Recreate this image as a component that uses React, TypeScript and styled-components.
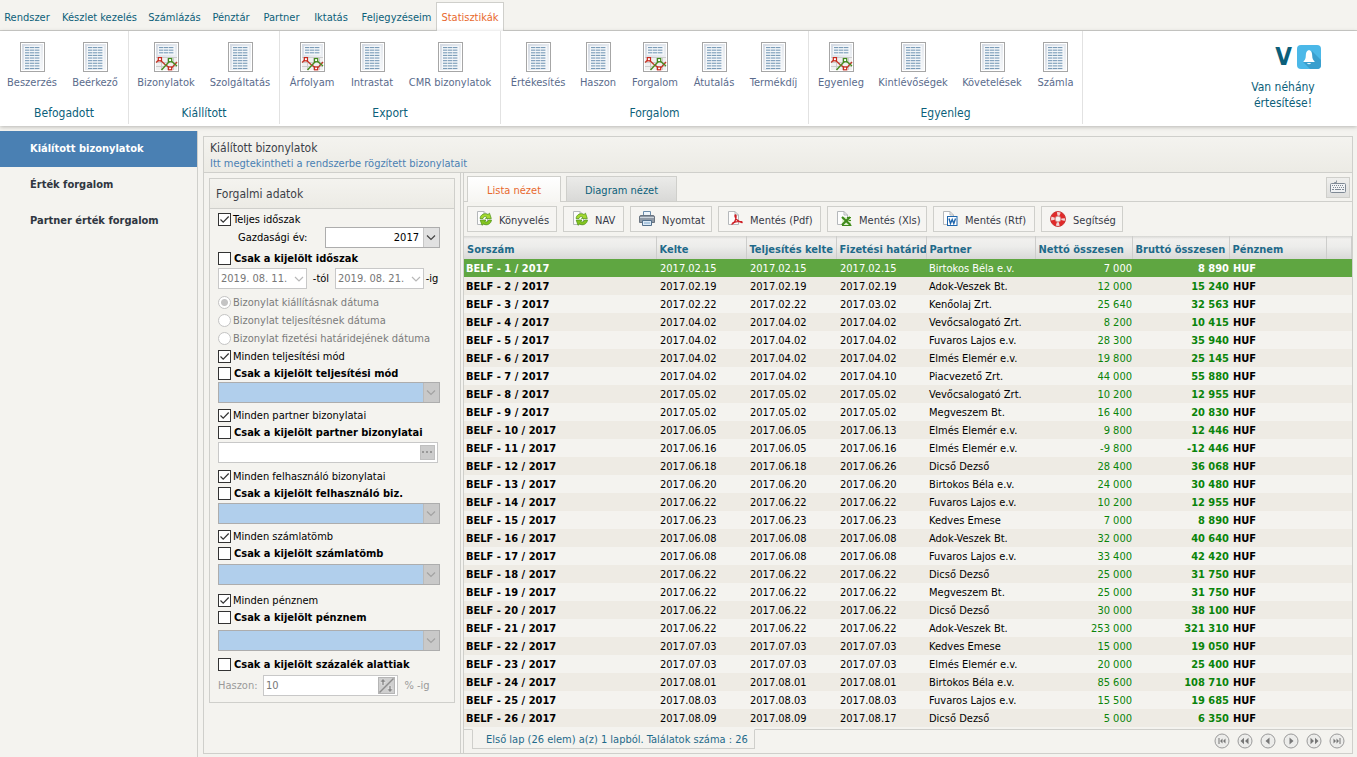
import React, { useState } from "react";
import styled, { createGlobalStyle, css } from "styled-components";

const color = {
  page: "#f4f3ef",
  line: "#cfcfcb",
  teal: "#0c5f7a",
  orange: "#e8692e",
  blue: "#4a80b3",
};

const GlobalStyle = createGlobalStyle`
  * { box-sizing: border-box; }
  body {
    margin: 0;
    background: ${color.page};
    font-family: "DejaVu Sans Condensed", "DejaVu Sans", sans-serif;
    font-stretch: condensed;
    font-size: 11px;
    line-height: 14px;
    color: #000;
  }
  button, input, select {
    font: inherit;
    color: inherit;
    margin: 0;
  }
`;

const Page = styled.div`
  display: flex;
  flex-direction: column;
  min-height: 100vh;
`;

/* ---------- main menu ---------- */

const MenuBar = styled.nav`
  display: flex;
  align-items: flex-end;
  height: 31px;
  border-bottom: 1px solid ${color.line};
`;

const MenuItem = styled.button<{ $active?: boolean; $width: number }>`
  width: ${(p) => p.$width}px;
  height: 28px;
  padding: 2px 0 0;
  border: 1px solid transparent;
  border-bottom: 0;
  background: none;
  color: ${color.teal};
  white-space: nowrap;
  ${(p) =>
    p.$active &&
    css`
      height: 29px;
      margin-bottom: -1px;
      border-color: ${color.line};
      background: #fff;
      color: ${color.orange};
    `}
`;

/* ---------- ribbon ---------- */

const Ribbon = styled.header`
  display: flex;
  height: 95px;
  background: #fff;
  box-shadow: 0 1px 4px rgba(0, 0, 0, 0.25);
`;

const RibbonGroup = styled.section`
  display: flex;
  flex-direction: column;
  justify-content: space-between;
  height: 93px;
  padding: 11px 1px 4px;
  border-right: 1px solid #e2e2e2;
`;

const RibbonItems = styled.div`
  display: flex;
`;

const RibbonButton = styled.button<{ $width: number }>`
  display: flex;
  flex-direction: column;
  align-items: center;
  gap: 4px;
  width: ${(p) => p.$width}px;
  padding: 0;
  border: 0;
  background: none;
  color: #5a6b8c;
  white-space: nowrap;
`;

const GroupTitle = styled.div`
  font-size: 12px;
  text-align: center;
  color: ${color.teal};
`;

const Notice = styled.div`
  display: flex;
  flex-direction: column;
  align-items: center;
  width: 148px;
  margin-left: auto;
  padding-top: 13px;
  font-size: 12px;
  line-height: 16px;
  text-align: center;
  color: ${color.teal};
`;

const NoticeTop = styled.div`
  display: flex;
  align-items: center;
  gap: 5px;
  height: 26px;
  margin: 0 0 9px 30px;
  font-size: 24px;
  font-weight: bold;
`;

/* ---------- body ---------- */

const Body = styled.div`
  display: flex;
  flex: 1;
  padding-top: 5px;
`;

const Sidebar = styled.nav`
  flex: 0 0 198px;
  border-right: 1px solid ${color.line};
`;

const SideLink = styled.a<{ $active?: boolean }>`
  display: flex;
  align-items: center;
  height: 36px;
  padding-left: 30px;
  font-weight: bold;
  text-decoration: none;
  color: ${(p) => (p.$active ? "#fff" : "#2f3640")};
  background: ${(p) => (p.$active ? color.blue : "none")};
`;

const Panel = styled.main`
  display: flex;
  flex-direction: column;
  flex: 1;
  min-width: 0;
  margin: 5px 4px 3px 5px;
  border: 1px solid ${color.line};
`;

const PanelHeader = styled.div`
  height: 36px;
  padding: 3px 6px;
  border-bottom: 1px solid ${color.line};
  background: linear-gradient(#f4f3ef, #ecebe5);
`;

const PanelTitle = styled.h1`
  margin: 0;
  font-size: 12px;
  font-weight: normal;
  line-height: 16px;
  color: #3c3f48;
`;

const PanelHint = styled.div`
  line-height: 16px;
  color: ${color.blue};
`;

const Columns = styled.div`
  display: flex;
  flex: 1;
`;

const FilterColumn = styled.aside`
  flex: 0 0 257px;
  padding: 5px;
  border-right: 1px solid ${color.line};
`;

const FilterBox = styled.form`
  width: 246px;
  border: 1px solid ${color.line};
`;

const FilterTitle = styled.h2`
  margin: 0;
  height: 30px;
  padding-left: 6px;
  border-bottom: 1px solid ${color.line};
  background: linear-gradient(#f4f3ef, #ecebe5);
  font-size: 12px;
  font-weight: normal;
  line-height: 30px;
  color: #3c3f48;
`;

const FilterBody = styled.div`
  padding: 2px 14px 6px 8px;
`;

/* $top is the space over the group, $field the extra space over its last control */
const FilterGroup = styled.div<{ $top: number; $field?: number }>`
  display: flex;
  flex-direction: column;
  gap: 1px;
  margin-top: ${(p) => p.$top}px;
  & > :last-child { margin-top: ${(p) => p.$field ?? 0}px; }
`;

const RadioList = styled.div`
  margin-top: 4px;
`;

const LabelText = styled.span`
  padding-top: 2px;
`;

const CheckLabel = styled.label<{ $strong?: boolean }>`
  display: flex;
  align-items: center;
  gap: ${(p) => (p.$strong ? 3 : 2)}px;
  height: 16px;
  white-space: nowrap;
  font-weight: ${(p) => (p.$strong ? "bold" : "normal")};
`;

const CheckBox = styled.input`
  appearance: none;
  flex: none;
  width: 13px;
  height: 13px;
  border: 1px solid #333;
  background: #fff;
`;

const CheckCell = styled.span`
  display: grid;
  & > * { grid-area: 1 / 1; }
  & > svg { pointer-events: none; }
  & > input:not(:checked) + svg { visibility: hidden; }
`;

const RadioLabel = styled.label`
  display: flex;
  align-items: center;
  gap: 2px;
  height: 18px;
  color: #7b7b7b;
  white-space: nowrap;
`;

const Radio = styled.input`
  appearance: none;
  flex: none;
  width: 13px;
  height: 13px;
  border: 1px solid #c4c4c4;
  border-radius: 50%;
  background: #fff;
  &:checked {
    background: radial-gradient(circle, #c4c4c4 3px, #fff 4px);
  }
`;

const FieldRow = styled.div<{ $muted?: boolean }>`
  display: flex;
  align-items: center;
  color: ${(p) => (p.$muted ? "#9a9a9a" : "#000")};
`;

const YearLabel = styled.label`
  flex: 1;
  padding-left: 20px;
`;

const ProfitLabel = styled.label`
  width: 45px;
`;

const Suffix = styled.span<{ $width: number }>`
  width: ${(p) => p.$width}px;
  text-align: center;
`;

const Picker = styled.div<{ $width?: number }>`
  display: grid;
  grid-template-columns: 1fr 17px;
  width: ${(p) => (p.$width ? `${p.$width}px` : "100%")};
  height: 21px;
  & > select { grid-area: 1 / 1 / 2 / 3; }
  & > svg { grid-area: 1 / 2; pointer-events: none; }
`;

const Select = styled.select`
  appearance: none;
  min-width: 0;
  padding: 0 20px 0 2px;
  border: 1px solid #adadad;
  border-radius: 0;
  background: #fff;
  text-align: right;
  text-align-last: right;
  &:disabled {
    background: #b1cfec;
    opacity: 1;
  }
`;

const Boxed = styled.div<{ $width?: number }>`
  display: flex;
  align-items: center;
  width: ${(p) => (p.$width ? `${p.$width}px` : "auto")};
  height: 21px;
  padding-right: 2px;
  border: 1px solid #c8c8c8;
  background: #fff;
`;

const PlainInput = styled.input`
  flex: 1;
  min-width: 0;
  width: 0;
  padding: 0 2px;
  border: 0;
  background: none;
  color: #777;
  white-space: nowrap;
`;

const DotsButton = styled.button`
  display: flex;
  align-items: center;
  justify-content: center;
  width: 15px;
  height: 15px;
  padding: 0;
  border: 1px solid #bfbfbf;
  background: #cccccc;
`;

/* ---------- list side ---------- */

const ListColumn = styled.section`
  display: flex;
  flex-direction: column;
  flex: 1;
  min-width: 0;
  margin-left: 2px;
  border-left: 1px solid ${color.line};
`;

const TabBar = styled.div`
  display: flex;
  align-items: flex-end;
  gap: 5px;
  height: 29px;
  padding: 0 2px 0 3px;
  border-bottom: 1px solid ${color.line};
`;

const Tab = styled.button<{ $active?: boolean; $width: number }>`
  width: ${(p) => p.$width}px;
  height: ${(p) => (p.$active ? 26 : 25)}px;
  margin-bottom: ${(p) => (p.$active ? -1 : 0)}px;
  padding: 3px 0 0;
  border: 1px solid ${color.line};
  border-bottom: 0;
  background: ${(p) =>
    p.$active ? "linear-gradient(#fff, #f6f5f2)" : "linear-gradient(#ebebe9, #d9d9d7)"};
  color: ${(p) => (p.$active ? color.orange : color.teal)};
`;

const KeyboardButton = styled.button`
  display: flex;
  align-items: center;
  justify-content: center;
  align-self: center;
  width: 24px;
  height: 21px;
  margin: 0 0 0 auto;
  padding: 0;
  border: 1px solid ${color.line};
  background: linear-gradient(#efefed, #dfdfdd);
`;

const Toolbar = styled.div`
  display: flex;
  gap: 6px;
  padding: 4px 3px;
`;

const ToolButton = styled.button<{ $width: number }>`
  display: flex;
  align-items: center;
  gap: 7px;
  width: ${(p) => p.$width}px;
  height: 26px;
  padding: 0 0 0 8px;
  border: 1px solid ${color.line};
  background: #f6f5f2;
  color: #363a48;
  white-space: nowrap;
  & > span { padding-top: 4px; }
  & > svg { flex: none; }
`;

const Grid = styled.table`
  width: 100%;
  table-layout: fixed;
  border-collapse: collapse;
`;

const GridHead = styled.th`
  height: 23px;
  padding: 4px 0 0 3px;
  overflow: hidden;
  white-space: nowrap;
  text-align: left;
  color: #1f6a8a;
  border-right: 1px solid #cdcdcb;
`;

const HeadRow = styled.tr`
  background: linear-gradient(#d5d5d2, #f1f0ee 3px, #ededeb 10px, #d9d9d8);
`;

const BodyRow = styled.tr<{ $selected?: boolean }>`
  height: 18px;
  &:nth-child(even) { background: #eeebe4; }
  ${(p) =>
    p.$selected &&
    css`
      background: #5fa641;
      td { color: #fff; }
    `}
`;

const Cell = styled.td<{ $strong?: boolean; $money?: boolean; $pad?: number }>`
  padding: 2px 0 0 ${(p) => p.$pad ?? 4}px;
  overflow: hidden;
  white-space: nowrap;
  font-weight: ${(p) => (p.$strong ? "bold" : "normal")};
  text-align: ${(p) => (p.$money ? "right" : "left")};
  color: ${(p) => (p.$money ? "#0a840a" : "#000")};
`;

const Footer = styled.div`
  display: flex;
  justify-content: space-between;
  margin-top: auto;
  height: 24px;
  padding: 0 7px 0 8px;
  border-top: 1px solid ${color.line};
`;

const Status = styled.div`
  height: 20px;
  margin-top: -1px;
  padding: 0 6px 0 13px;
  border: 1px solid ${color.line};
  border-top-color: ${color.page};
  line-height: 20px;
  color: #1f6a8a;
`;

const Pager = styled.div`
  display: flex;
  align-items: center;
  gap: 7px;
  padding-bottom: 2px;
`;

const PagerButton = styled.button`
  display: flex;
  width: 16px;
  height: 16px;
  padding: 0;
  border: 0;
  background: none;
`;

/* ---------- drawings ---------- */

function ReportIcon({ chart }: { chart?: boolean }) {
  const rows = chart ? 3 : 9;
  return (
    <svg width="25" height="30" viewBox="0 0 25 30">
      <defs>
        <linearGradient id="sheet" x1="0" y1="0" x2="1" y2="1">
          <stop offset="0" stopColor="#d3d9e2" />
          <stop offset="1" stopColor="#f6f8fa" />
        </linearGradient>
      </defs>
      <rect x="0.5" y="0.5" width="24" height="29" fill="#fff" stroke="#a6a6a6" />
      <rect x="2" y="2" width="21" height="26" fill="url(#sheet)" />
      <rect x="4" y="4" width="17" height={chart ? 9 : 23} fill="#f3f6f9" />
      {Array.from({ length: rows }, (_, i) =>
        [5, 10, 15].map((x) => (
          <rect key={`${x}-${i}`} x={x} y={5 + i * 2.62} width="4.4" height="1.1" fill="#7a9cb8" />
        ))
      )}
      {chart && (
        <g fill="none">
          <rect x="2" y="15" width="21" height="13" fill="#f0f0f0" />
          <path d="M2 15.5H23M2 20.5H23M2 24.5H23M7.500 15V28M13.500 15V28M19.500 15V28" stroke="#cdcdcd" />
          <path d="M2 20.500L5.500 17.500L11 22.500L16.500 26.500L19 24.500L23 20" stroke="#c03a2b" strokeWidth="1.400" />
          <path d="M7.500 28L12 23L16.500 18.500L23 24" stroke="#4a8c1f" strokeWidth="1.400" />
          <rect x="4.300" y="15.600" width="3.200" height="3.200" fill="#fff" stroke="#c8281c" strokeWidth="1.200" />
          <rect x="14.500" y="25" width="3.200" height="2.800" fill="#fff" stroke="#c8281c" strokeWidth="1.200" />
          <rect x="14.500" y="16.500" width="3.200" height="3.200" fill="#fff" stroke="#3f8a1b" strokeWidth="1.200" />
        </g>
      )}
    </svg>
  );
}

function BellIcon() {
  return (
    <svg width="24" height="24" viewBox="0 0 24 24">
      <rect width="24" height="24" rx="4" fill="#4bb8e8" />
      <path d="M15 6L24 15V20Q24 24 20 24H13L6 17Z" fill="#3a9fce" />
      <path d="M12 5C9.500 5.500 8.800 8 8.800 10.500C8.800 13.500 8 15 6.500 16.300V17H17.500V16.300C16 15 15.200 13.500 15.200 10.500C15.200 8 14.500 5.500 12 5Z" fill="#fff" />
      <path d="M10 18H14Q13.500 19.300 12 19.300Q10.500 19.300 10 18Z" fill="#e6f4fb" />
    </svg>
  );
}

const Tick = () => (
  <svg width="13" height="13" viewBox="0 0 13 13">
    <path d="M2.500 6.500L5.200 9.200L10.700 3.500" fill="none" stroke="#333" strokeWidth="1.200" />
  </svg>
);

const ArrowBox = ({ muted }: { muted?: boolean }) => (
  <svg width="17" height="21" viewBox="0 0 17 21">
    <rect x="0" y="0.5" width="16.500" height="20" fill={muted ? "#c9c9c9" : "#e1e1e1"} stroke="#adadad" />
    <path d="M4 8.500L8 12.500L12 8.500" fill="none" stroke={muted ? "#a3a3a3" : "#444"} strokeWidth="1.200" />
  </svg>
);

const DateArrow = () => (
  <svg width="10" height="8" viewBox="0 0 10 8">
    <path d="M1 2L5 6L9 2" fill="none" stroke="#b8b8b8" strokeWidth="1.200" />
  </svg>
);

const Dots = () => (
  <svg width="11" height="3" viewBox="0 0 11 3">
    <path d="M0 0H2V2H0ZM4 0H6V2H4ZM8 0H10V2H8Z" fill="#999" />
  </svg>
);

const SpinIcon = () => (
  <svg width="17" height="17" viewBox="0 0 17 17">
    <rect x="0.5" y="0.5" width="16" height="16" fill="#cfcfcf" stroke="#b5b5b5" />
    <path d="M1.500 15.500L15.500 1.500" stroke="#8d8d8d" strokeWidth="1.400" />
    <path d="M5 1.500L1.800 5H4V8.500H6V5H8.200Z" fill="#8a8a8a" stroke="#f5f5f5" strokeWidth="0.500" />
    <path d="M12 15.500L8.800 12H11V8.500H13V12H15.200Z" fill="#8a8a8a" stroke="#f5f5f5" strokeWidth="0.500" />
  </svg>
);

const KeyboardIcon = () => (
  <svg width="16" height="14" viewBox="0 0 16 14">
    <path d="M4.500 4V2.500H6.500V0.500" fill="none" stroke="#8b949e" />
    <rect x="0.500" y="3.500" width="15" height="9" rx="1" fill="#f0f2f4" stroke="#7f8994" />
    <path d="M2 5.500H14M3 7.500H14" stroke="#7f8994" strokeDasharray="1 1" />
    <path d="M2 9.500H4M5 9.500H11M12 9.500H14" stroke="#7f8994" />
  </svg>
);

const Sheet = () => (
  <path d="M1.500 0.500H8L11.500 4V13.500H1.500Z M8 0.500V4H11.500" fill="#fdfdfd" stroke="#b5b8bb" />
);

type ToolKind = "refresh" | "print" | "pdf" | "xls" | "rtf" | "help";

function ToolIcon({ kind }: { kind: ToolKind }) {
  return (
    <svg width="16" height="16" viewBox="0 0 16 16">
      {kind === "refresh" && (
        <>
          <Sheet />
          <path
            d="M4 7.500C4.500 3.500 8.500 1.500 12 3.500L13.500 2.200L15.300 7.500H9.500L10.800 6C9 5 7.500 5.800 7 7.500Z"
            fill="#a4d930"
            stroke="#4a8f14"
            strokeWidth="0.700"
          />
          <path
            d="M15.500 9C15 13 11 15 7.500 13L6 14.300L4.200 9H10L8.700 10.500C10.500 11.500 12 10.700 12.500 9Z"
            fill="#84c41f"
            stroke="#4a8f14"
            strokeWidth="0.700"
          />
        </>
      )}
      {kind === "print" && (
        <>
          <path d="M4.500 0.500H11.500V6H4.500Z" fill="#eef5fb" stroke="#6b8cab" />
          <path d="M0.500 6Q0.500 4.500 2 4.500H14Q15.500 4.500 15.500 6V11.500H0.500Z" fill="#8f99a5" stroke="#6a7480" />
          <path d="M1 6.500H15" stroke="#cdd4db" />
          <path d="M3.500 9.500H12.500V14.500H3.500Z" fill="#dceaf6" stroke="#54718d" />
          <path d="M5 12H11" stroke="#7fa6c9" />
        </>
      )}
      {kind === "pdf" && (
        <>
          <Sheet />
          <path
            d="M4.500 13.500C7 12 9.200 8.500 9 5C8.900 3.600 7.800 3.800 8 5.200C8.500 8.200 11.500 11 15 11.500C15.500 10.300 10.500 9.500 5.500 12"
            fill="none"
            stroke="#cf1f26"
            strokeWidth="1.400"
          />
        </>
      )}
      {kind === "xls" && (
        <>
          <Sheet />
          <rect x="6" y="6" width="9" height="8" fill="#dff0d0" />
          <path d="M6 6L14.500 14M14 6L6 14" stroke="#3f8a1b" strokeWidth="2.200" />
          <path d="M6 14.500H15.500M11 6.500H15M12.500 9.500H15" stroke="#3f8a1b" />
        </>
      )}
      {kind === "rtf" && (
        <>
          <Sheet />
          <rect x="5.500" y="5.500" width="9.500" height="9" fill="#fff" stroke="#1f66ad" />
          <path d="M7 7.500L8.500 12.500L10.200 8.500L11.800 12.500L13.500 7.500" fill="none" stroke="#1f66ad" strokeWidth="1.400" />
        </>
      )}
      {kind === "help" && (
        <>
          <circle cx="8" cy="8" r="5.200" fill="none" stroke="#e02a2a" strokeWidth="4.600" />
          <circle cx="8" cy="8" r="5.200" fill="none" stroke="#f3d4d4" strokeWidth="4" strokeDasharray="3 5.170" strokeDashoffset="1.500" />
          <circle cx="8" cy="8" r="7.500" fill="none" stroke="#c22a2a" strokeWidth="0.800" />
          <circle cx="8" cy="8" r="2.900" fill="#f6f5f2" stroke="#b84040" strokeWidth="0.600" />
        </>
      )}
    </svg>
  );
}

const pagerShapes = [
  { name: "Első lap", d: "M4.500 5V11H5.500V5ZM6 8L8.500 5.500V10.500ZM9 8L11.500 5.500V10.500Z" },
  { name: "Lapozás vissza", d: "M3.500 8L7 4.800V11.200ZM8 8L11.500 4.800V11.200Z" },
  { name: "Előző lap", d: "M5.500 8L9.500 4.500V11.500Z" },
  { name: "Következő lap", d: "M10.500 8L6.500 4.500V11.500Z" },
  { name: "Lapozás előre", d: "M8 8L4.500 4.800V11.200ZM12.500 8L9 4.800V11.200Z" },
  { name: "Utolsó lap", d: "M11.500 5V11H10.500V5ZM10 8L7.500 5.500V10.500ZM7 8L4.500 5.500V10.500Z" },
];

/* ---------- data ---------- */

const menu: [string, number][] = [
  ["Rendszer", 54],
  ["Készlet kezelés", 91],
  ["Számlázás", 59],
  ["Pénztár", 54],
  ["Partner", 47],
  ["Iktatás", 52],
  ["Feljegyzéseim", 79],
  ["Statisztikák", 68],
];

const ribbon: { title: string; items: [string, number, boolean?][] }[] = [
  { title: "Befogadott", items: [["Beszerzés", 62], ["Beérkező", 64]] },
  { title: "Kiállított", items: [["Bizonylatok", 72, true], ["Szolgáltatás", 76]] },
  { title: "Export", items: [["Árfolyam", 62, true], ["Intrastat", 58], ["CMR bizonylatok", 98]] },
  {
    title: "Forgalom",
    items: [["Értékesítés", 72], ["Haszon", 48], ["Forgalom", 66, true], ["Átutalás", 52], ["Termékdíj", 67]],
  },
  {
    title: "Egyenleg",
    items: [["Egyenleg", 62, true], ["Kintlévőségek", 82], ["Követelések", 76], ["Számla", 51]],
  },
];

const tools: [string, ToolKind, number][] = [
  ["Könyvelés", "refresh", 90],
  ["NAV", "refresh", 61],
  ["Nyomtat", "print", 82],
  ["Mentés (Pdf)", "pdf", 103],
  ["Mentés (Xls)", "xls", 100],
  ["Mentés (Rtf)", "rtf", 102],
  ["Segítség", "help", 82],
];

const columns: [string, number?][] = [
  ["Sorszám", 192],
  ["Kelte", 90],
  ["Teljesítés kelte", 90],
  ["Fizetési határid", 90],
  ["Partner", 109],
  ["Nettó összesen", 97],
  ["Bruttó összesen", 97],
  ["Pénznem", 97],
  [""],
];

const invoices: [string, string, string, string, string, string][] = [
  ["2017.02.15", "2017.02.15", "2017.02.15", "Birtokos Béla e.v.", "7 000", "8 890"],
  ["2017.02.19", "2017.02.19", "2017.02.19", "Adok-Veszek Bt.", "12 000", "15 240"],
  ["2017.02.22", "2017.02.22", "2017.03.02", "Kenőolaj Zrt.", "25 640", "32 563"],
  ["2017.04.02", "2017.04.02", "2017.04.02", "Vevőcsalogató Zrt.", "8 200", "10 415"],
  ["2017.04.02", "2017.04.02", "2017.04.02", "Fuvaros Lajos e.v.", "28 300", "35 940"],
  ["2017.04.02", "2017.04.02", "2017.04.02", "Elmés Elemér e.v.", "19 800", "25 145"],
  ["2017.04.02", "2017.04.02", "2017.04.10", "Piacvezető Zrt.", "44 000", "55 880"],
  ["2017.05.02", "2017.05.02", "2017.05.02", "Vevőcsalogató Zrt.", "10 200", "12 955"],
  ["2017.05.02", "2017.05.02", "2017.05.02", "Megveszem Bt.", "16 400", "20 830"],
  ["2017.06.05", "2017.06.05", "2017.06.13", "Elmés Elemér e.v.", "9 800", "12 446"],
  ["2017.06.16", "2017.06.05", "2017.06.16", "Elmés Elemér e.v.", "-9 800", "-12 446"],
  ["2017.06.18", "2017.06.18", "2017.06.26", "Dicső Dezső", "28 400", "36 068"],
  ["2017.06.20", "2017.06.20", "2017.06.20", "Birtokos Béla e.v.", "24 000", "30 480"],
  ["2017.06.22", "2017.06.22", "2017.06.22", "Fuvaros Lajos e.v.", "10 200", "12 955"],
  ["2017.06.23", "2017.06.23", "2017.06.23", "Kedves Emese", "7 000", "8 890"],
  ["2017.06.08", "2017.06.08", "2017.06.08", "Adok-Veszek Bt.", "32 000", "40 640"],
  ["2017.06.08", "2017.06.08", "2017.06.08", "Fuvaros Lajos e.v.", "33 400", "42 420"],
  ["2017.06.22", "2017.06.22", "2017.06.22", "Dicső Dezső", "25 000", "31 750"],
  ["2017.06.22", "2017.06.22", "2017.06.22", "Megveszem Bt.", "25 000", "31 750"],
  ["2017.06.22", "2017.06.22", "2017.06.22", "Dicső Dezső", "30 000", "38 100"],
  ["2017.06.22", "2017.06.22", "2017.06.22", "Adok-Veszek Bt.", "253 000", "321 310"],
  ["2017.07.03", "2017.07.03", "2017.07.03", "Kedves Emese", "15 000", "19 050"],
  ["2017.07.03", "2017.07.03", "2017.07.03", "Elmés Elemér e.v.", "20 000", "25 400"],
  ["2017.08.01", "2017.08.01", "2017.08.01", "Birtokos Béla e.v.", "85 600", "108 710"],
  ["2017.08.03", "2017.08.03", "2017.08.03", "Fuvaros Lajos e.v.", "15 500", "19 685"],
  ["2017.08.09", "2017.08.09", "2017.08.17", "Dicső Dezső", "5 000", "6 350"],
];

const dateBases = [
  "Bizonylat kiállításnak dátuma",
  "Bizonylat teljesítésnek dátuma",
  "Bizonylat fizetési határidejének dátuma",
];

/* ---------- parts ---------- */

function Check({ text, on, strong }: { text: string; on?: boolean; strong?: boolean }) {
  return (
    <CheckLabel $strong={strong}>
      <CheckCell>
        <CheckBox type="checkbox" defaultChecked={on} />
        <Tick />
      </CheckCell>
      <LabelText>{text}</LabelText>
    </CheckLabel>
  );
}

function BlankPicker({ name }: { name: string }) {
  return (
    <Picker>
      <Select disabled aria-label={name} />
      <ArrowBox muted />
    </Picker>
  );
}

function DateField({ name, value }: { name: string; value: string }) {
  return (
    <Boxed $width={89}>
      <PlainInput disabled aria-label={name} defaultValue={value} />
      <DateArrow />
    </Boxed>
  );
}

function Filters() {
  return (
    <FilterBox>
      <FilterTitle>Forgalmi adatok</FilterTitle>
      <FilterBody>
        <Check text="Teljes időszak" on />
        <FieldRow>
          <YearLabel htmlFor="year">Gazdasági év:</YearLabel>
          <Picker $width={115}>
            <Select id="year" defaultValue="2017">
              <option>2017</option>
            </Select>
            <ArrowBox />
          </Picker>
        </FieldRow>
        <FilterGroup $top={2} $field={1}>
          <Check text="Csak a kijelölt időszak" strong />
          <FieldRow>
            <DateField name="Kezdő dátum" value="2019. 08. 11." />
            <Suffix $width={28}>-tól</Suffix>
            <DateField name="Záró dátum" value="2019. 08. 21." />
            <Suffix $width={16}>-ig</Suffix>
          </FieldRow>
        </FilterGroup>
        <RadioList>
          {dateBases.map((text, i) => (
            <RadioLabel key={text}>
              <Radio type="radio" name="basis" disabled defaultChecked={i === 0} />
              <LabelText>{text}</LabelText>
            </RadioLabel>
          ))}
        </RadioList>
        <FilterGroup $top={1}>
          <Check text="Minden teljesítési mód" on />
          <Check text="Csak a kijelölt teljesítési mód" strong />
          <BlankPicker name="Teljesítési mód" />
        </FilterGroup>
        <FilterGroup $top={4} $field={1}>
          <Check text="Minden partner bizonylatai" on />
          <Check text="Csak a kijelölt partner bizonylatai" strong />
          <Boxed $width={220}>
            <PlainInput disabled aria-label="Partner" />
            <DotsButton type="button" disabled aria-label="Partner keresése">
              <Dots />
            </DotsButton>
          </Boxed>
        </FilterGroup>
        <FilterGroup $top={5} $field={1}>
          <Check text="Minden felhasználó bizonylatai" on />
          <Check text="Csak a kijelölt felhasználó biz." strong />
          <BlankPicker name="Felhasználó" />
        </FilterGroup>
        <FilterGroup $top={4} $field={2}>
          <Check text="Minden számlatömb" on />
          <Check text="Csak a kijelölt számlatömb" strong />
          <BlankPicker name="Számlatömb" />
        </FilterGroup>
        <FilterGroup $top={7} $field={4}>
          <Check text="Minden pénznem" on />
          <Check text="Csak a kijelölt pénznem" strong />
          <BlankPicker name="Pénznem" />
        </FilterGroup>
        <FilterGroup $top={5} $field={2}>
          <Check text="Csak a kijelölt százalék alattiak" strong />
          <FieldRow $muted>
            <ProfitLabel htmlFor="profit">Haszon:</ProfitLabel>
            <Boxed $width={135}>
              <PlainInput id="profit" disabled defaultValue="10" />
              <SpinIcon />
            </Boxed>
            <Suffix $width={38}>% -ig</Suffix>
          </FieldRow>
        </FilterGroup>
      </FilterBody>
    </FilterBox>
  );
}

function InvoiceTable() {
  const [selected, setSelected] = useState(0);
  return (
    <Grid>
      <colgroup>
        {columns.map(([name, width]) => (
          <col key={name} width={width} />
        ))}
      </colgroup>
      <thead>
        <HeadRow>
          {columns.map(([name]) => (
            <GridHead key={name}>{name}</GridHead>
          ))}
        </HeadRow>
      </thead>
      <tbody>
        {invoices.map(([issued, done, due, partner, net, gross], i) => (
          <BodyRow key={i} $selected={i === selected} onClick={() => setSelected(i)}>
            <Cell $strong $pad={2}>{`BELF - ${i + 1} / 2017`}</Cell>
            <Cell>{issued}</Cell>
            <Cell>{done}</Cell>
            <Cell>{due}</Cell>
            <Cell $pad={3}>{partner}</Cell>
            <Cell $money>{net}</Cell>
            <Cell $money $strong>{gross}</Cell>
            <Cell $strong>HUF</Cell>
            <Cell />
          </BodyRow>
        ))}
      </tbody>
    </Grid>
  );
}

export default function App() {
  return (
    <Page>
      <GlobalStyle />
      <MenuBar>
        {menu.map(([name, width], i) => (
          <MenuItem key={name} $width={width} $active={i === menu.length - 1}>
            {name}
          </MenuItem>
        ))}
      </MenuBar>
      <Ribbon>
        {ribbon.map((group) => (
          <RibbonGroup key={group.title}>
            <RibbonItems>
              {group.items.map(([name, width, chart]) => (
                <RibbonButton key={name} $width={width}>
                  <ReportIcon chart={chart} />
                  {name}
                </RibbonButton>
              ))}
            </RibbonItems>
            <GroupTitle>{group.title}</GroupTitle>
          </RibbonGroup>
        ))}
        <Notice>
          <NoticeTop>
            V
            <BellIcon />
          </NoticeTop>
          Van néhány
          <br />
          értesítése!
        </Notice>
      </Ribbon>
      <Body>
        <Sidebar>
          <SideLink href="#issued" $active>Kiálított bizonylatok</SideLink>
          <SideLink href="#value">Érték forgalom</SideLink>
          <SideLink href="#partner">Partner érték forgalom</SideLink>
        </Sidebar>
        <Panel>
          <PanelHeader>
            <PanelTitle>Kiálított bizonylatok</PanelTitle>
            <PanelHint>Itt megtekintheti a rendszerbe rögzített bizonylatait</PanelHint>
          </PanelHeader>
          <Columns>
            <FilterColumn>
              <Filters />
            </FilterColumn>
            <ListColumn>
              <TabBar>
                <Tab $active $width={94}>Lista nézet</Tab>
                <Tab $width={111}>Diagram nézet</Tab>
                <KeyboardButton aria-label="Billentyűzet">
                  <KeyboardIcon />
                </KeyboardButton>
              </TabBar>
              <Toolbar>
                {tools.map(([name, kind, width]) => (
                  <ToolButton key={name} $width={width}>
                    <ToolIcon kind={kind} />
                    <span>{name}</span>
                  </ToolButton>
                ))}
              </Toolbar>
              <InvoiceTable />
              <Footer>
                <Status>Első lap (26 elem) a(z) 1 lapból. Találatok száma : 26</Status>
                <Pager>
                  {pagerShapes.map((shape) => (
                    <PagerButton key={shape.name} aria-label={shape.name}>
                      <svg width="16" height="16" viewBox="0 0 16 16">
                        <circle cx="8" cy="8" r="7" fill="#ececea" stroke="#9a9a9a" />
                        <path d={shape.d} fill="#777" />
                      </svg>
                    </PagerButton>
                  ))}
                </Pager>
              </Footer>
            </ListColumn>
          </Columns>
        </Panel>
      </Body>
    </Page>
  );
}
